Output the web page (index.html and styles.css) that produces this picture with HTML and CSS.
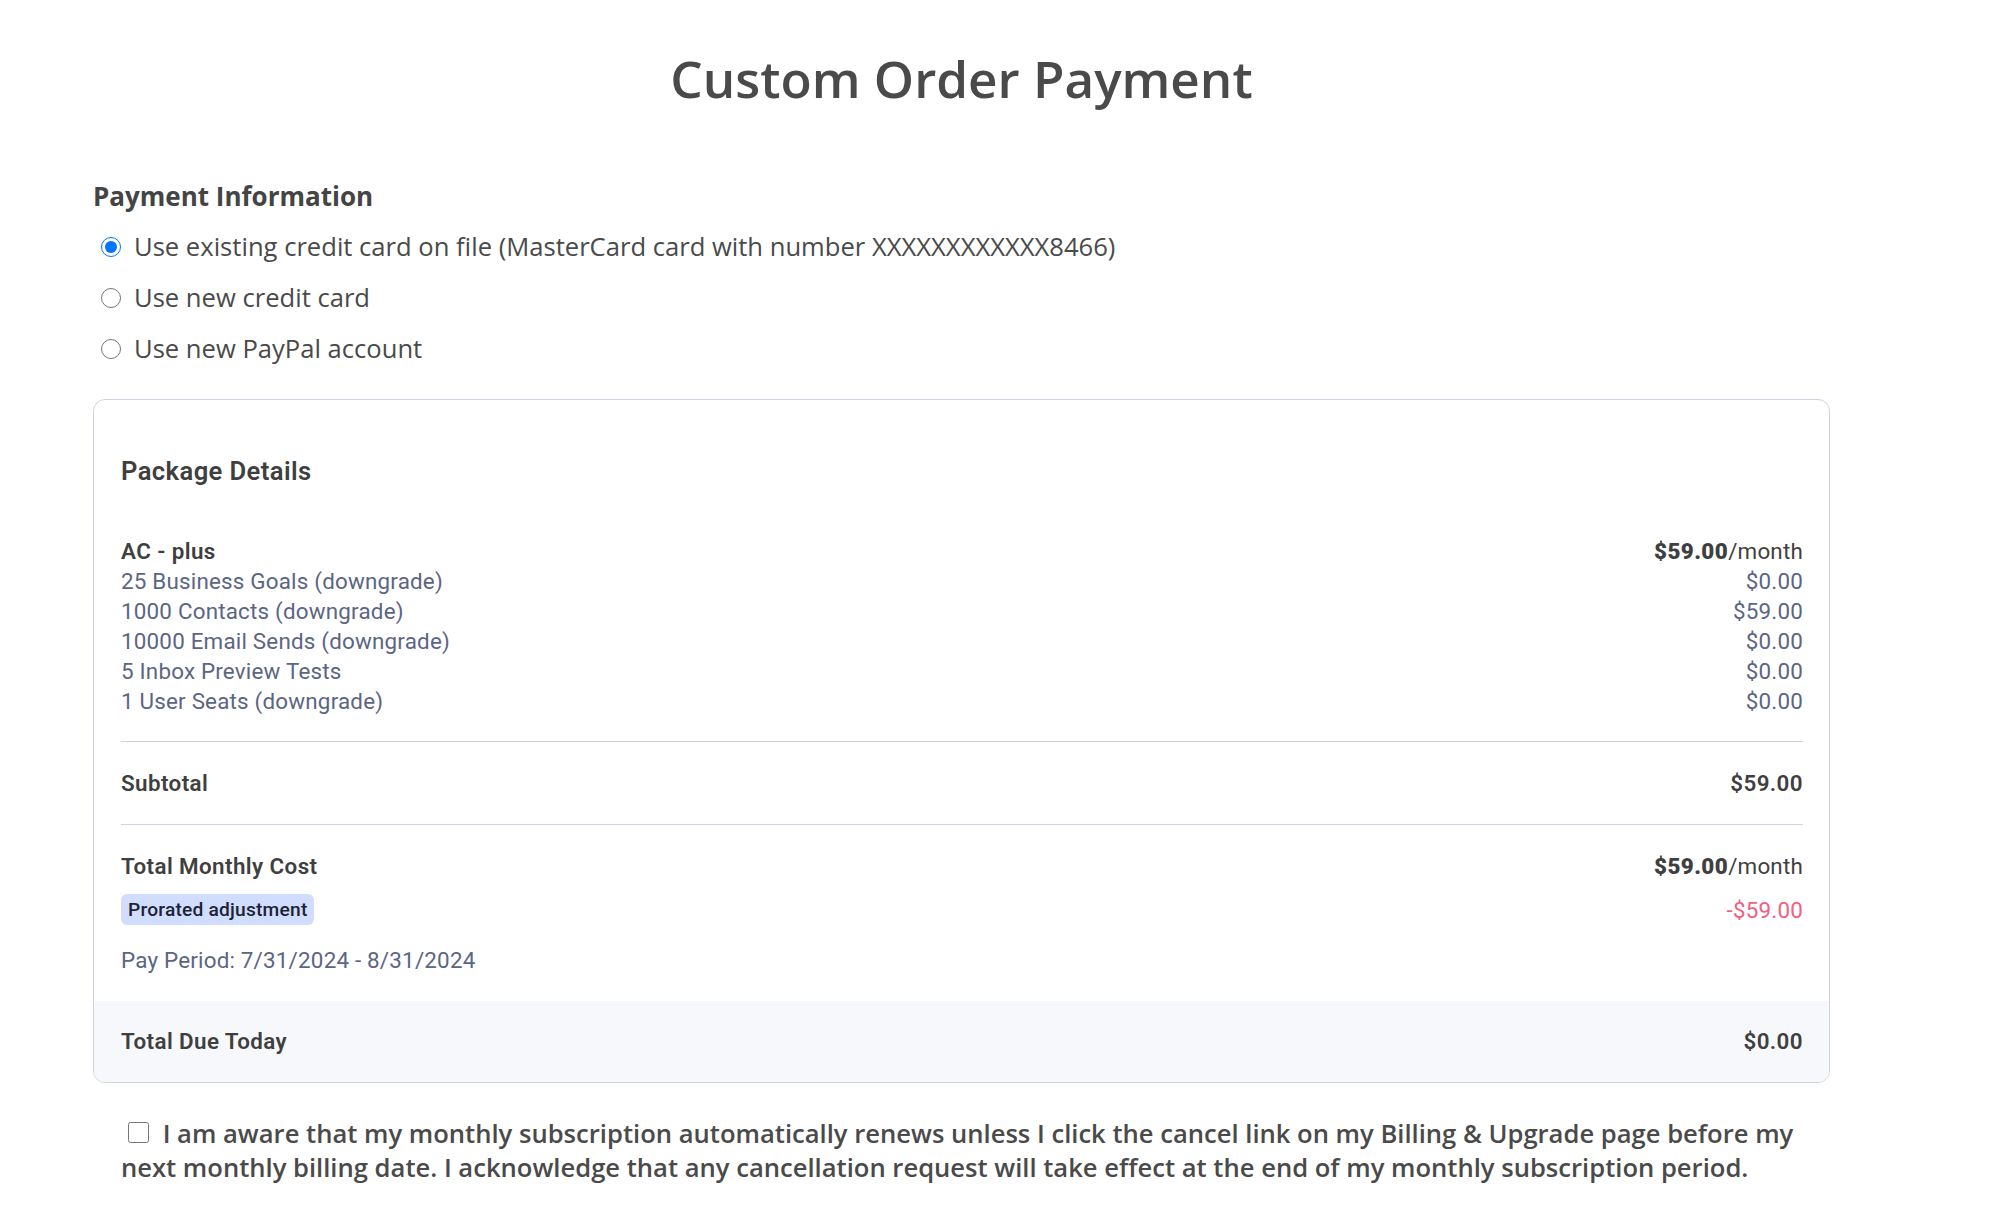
FILE: index.html
```html
<!DOCTYPE html>
<html>
<head>
  <meta charset="utf-8">
  <title>Custom Order Payment</title>
  <link rel="stylesheet" href="styles.css">
</head>
<body>
  <div id="page">
    <h1>Custom Order Payment</h1>

    <!-- Payment method -->
    <div id="paymentInfo">
      <h2>Payment Information</h2>
      <label class="option"><input type="radio" name="payMethod" checked> Use existing credit card on file (MasterCard card with number XXXXXXXXXXXX8466)</label>
      <label class="option"><input type="radio" name="payMethod"> Use new credit card</label>
      <label class="option"><input type="radio" name="payMethod"> Use new PayPal account</label>
    </div>

    <!-- Package summary card -->
    <div id="packageCard">
      <div class="cardBody">
        <h3>Package Details</h3>
        <div class="items">
          <div class="row strong"><span>AC - plus</span><span><b>$59.00</b><span class="unit">/month</span></span></div>
          <div class="row"><span>25 Business Goals (downgrade)</span><span>$0.00</span></div>
          <div class="row"><span>1000 Contacts (downgrade)</span><span>$59.00</span></div>
          <div class="row"><span>10000 Email Sends (downgrade)</span><span>$0.00</span></div>
          <div class="row"><span>5 Inbox Preview Tests</span><span>$0.00</span></div>
          <div class="row"><span>1 User Seats (downgrade)</span><span>$0.00</span></div>
        </div>
        <div class="subtotal">
          <div class="row strong"><span>Subtotal</span><span>$59.00</span></div>
        </div>
        <div class="monthly">
          <div class="row strong"><span>Total Monthly Cost</span><span><b>$59.00</b><span class="unit">/month</span></span></div>
          <div class="row badgeRow"><span class="badge">Prorated adjustment</span><span class="negative">-$59.00</span></div>
          <div class="row period"><span>Pay Period: 7/31/2024 - 8/31/2024</span></div>
        </div>
      </div>
      <div class="cardFooter row strong"><span>Total Due Today</span><span>$0.00</span></div>
    </div>

    <p id="terms"><input type="checkbox"> I am aware that my monthly subscription automatically renews unless I click the cancel link on my Billing &amp; Upgrade page before my next monthly billing date. I acknowledge that any cancellation request will take effect at the end of my monthly subscription period.</p>
  </div>
</body>
</html>
```

FILE: styles.css
```css
/* General page */
body {
  margin: 0;
  font-family: "Open Sans", sans-serif;
  color: #4a4a4a;
  background: #fff;
}

#page {
  width: 1737px;
  margin-left: 93px;
}

h1 {
  margin: 0;
  padding-top: 48px;
  font-size: 51.2px;
  font-weight: 600;
  line-height: 60px;
  text-align: center;
  color: #4a4a4a;
}

/* Payment method */
h2 {
  margin: 72px 0 9px;
  font-size: 26px;
  font-weight: 700;
  line-height: 32px;
  color: #444;
}

.option {
  display: flex;
  align-items: center;
  height: 51px;
  font-size: 25.6px;
  color: #4a4a4a;
}

.option input {
  width: 20px;
  height: 20px;
  margin: 1px 13px 0 8px;
}

/* Package card */
#packageCard {
  margin-top: 25px;
  border: 1px solid #cdd3e0;
  border-radius: 12px;
  overflow: hidden;
  font-family: "Roboto", sans-serif;
}

.cardBody {
  padding: 56px 26px 0 27px;
}

h3 {
  margin: 0 0 50px;
  font-size: 25.6px;
  font-weight: 600;
  line-height: 30px;
  letter-spacing: 0.4px;
  color: #3f3f3f;
}

.row {
  display: flex;
  justify-content: space-between;
  align-items: center;
  line-height: 30px;
  font-size: 22.4px;
  letter-spacing: 0.2px;
  color: #5b6584;
}

.row.strong {
  font-weight: 600;
  letter-spacing: 0.4px;
  color: #3f3f3f;
}

.unit {
  font-weight: 400;
  letter-spacing: 0.2px;
}

.items {
  padding-bottom: 25px;
  border-bottom: 1px solid #cdd3e0;
}

.subtotal {
  padding: 26px 0;
  border-bottom: 1px solid #cdd3e0;
}

.monthly {
  padding: 26px 0;
}

.badgeRow {
  margin-top: 13px;
}

.badge {
  padding: 0 7px;
  line-height: 31px;
  font-size: 19.2px;
  font-weight: 500;
  color: #1c2333;
  background: #d1ddfe;
  border-radius: 6px;
}

.negative {
  color: #f0607f;
}

.period {
  margin-top: 20px;
}

.cardFooter {
  padding: 0 26px 0 27px;
  line-height: 81px;
  background: #f7f8fc;
}

/* Terms checkbox */
#terms {
  margin: 34px 0 0;
  padding: 0 28px;
  font-size: 25.6px;
  font-weight: 600;
  line-height: 34px;
  color: #4a4a4a;
}

#terms input {
  width: 21px;
  height: 21px;
  margin: 0 7px 0 7px;
  vertical-align: baseline;
}
```
